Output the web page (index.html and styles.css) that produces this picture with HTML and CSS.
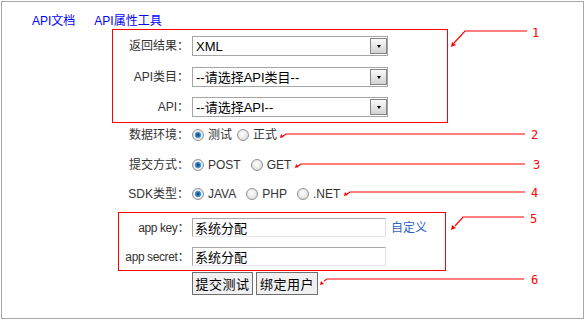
FILE: index.html
```html
<!DOCTYPE html>
<html lang="zh-CN">
<head>
<meta charset="utf-8">
<title>API测试工具</title>
<link rel="stylesheet" href="styles.css">
</head>
<body>
<div class="frame">
  <div class="nav"><a href="#">API文档</a><a href="#">API属性工具</a></div>
  <div class="form">
    <div class="group g-api">
      <div class="row sel-row"><span class="lbl">返回结果：</span><span class="sel"><select><option>XML</option></select></span></div>
      <div class="row sel-row"><span class="lbl">API类目：</span><span class="sel"><select><option>--请选择API类目--</option></select></span></div>
      <div class="row sel-row"><span class="lbl">API：</span><span class="sel"><select><option>--请选择API--</option></select></span></div>
    </div>
    <div class="row opt-row r-env"><span class="lbl">数据环境：</span>
      <label class="opt"><input type="radio" name="env" checked><span>测试</span></label>
      <label class="opt"><input type="radio" name="env"><span>正式</span></label>
    </div>
    <div class="row opt-row r-wide r-method"><span class="lbl">提交方式：</span>
      <label class="opt"><input type="radio" name="m" checked><span>POST</span></label>
      <label class="opt"><input type="radio" name="m"><span>GET</span></label>
    </div>
    <div class="row opt-row r-wide r-sdk"><span class="lbl">SDK类型：</span>
      <label class="opt"><input type="radio" name="sdk" checked><span>JAVA</span></label>
      <label class="opt"><input type="radio" name="sdk"><span>PHP</span></label>
      <label class="opt"><input type="radio" name="sdk"><span>.NET</span></label>
    </div>
    <div class="group g-key">
      <div class="row key-row"><span class="lbl">app key：</span><input class="txt" type="text" value="系统分配"><a class="custom" href="#">自定义</a></div>
      <div class="row key-row second"><span class="lbl">app secret：</span><input class="txt" type="text" value="系统分配"></div>
    </div>
    <div class="buttons">
      <button class="btn b1" type="button">提交测试</button><button class="btn b2" type="button">绑定用户</button>
    </div>
  </div>
</div>
<svg class="notes" width="585" height="320" viewBox="0 0 585 320" xmlns="http://www.w3.org/2000/svg">
  <g fill="none" stroke="#ff0000" stroke-width="1.2">
    <polyline points="527,31 465,31 454,43"/>
    <polyline points="525,134 286,134 283,136"/>
    <polyline points="525,164 301,164 298,166"/>
    <polyline points="525,192 350,192 347,194"/>
    <polyline points="524,217 463,217 455,226"/>
    <polyline points="524,279 327,279 324,281"/>
  </g>
  <g fill="#ff0000">
    <polygon points="451,47 452,42 456,45"/>
    <polygon points="280,138 281,134 284,137"/>
    <polygon points="295,168 296,164 299,167"/>
    <polygon points="344,196 345,192 348,195"/>
    <polygon points="451,230 452,225 456,228"/>
    <polygon points="320,285 321,281 324,284"/>
  </g>
  <g class="num" fill="#ff0000">
    <text x="532" y="37">1</text>
    <text x="531" y="139">2</text>
    <text x="533" y="169">3</text>
    <text x="531" y="197">4</text>
    <text x="530" y="223">5</text>
    <text x="531" y="284">6</text>
  </g>
</svg>
</body>
</html>
```
FILE: styles.css
```css
html, body {
  margin: 0;
  padding: 0;
  background: #ffffff;
}
body {
  position: relative;
  width: 585px;
  height: 320px;
  font-family: "Liberation Sans", "Noto Sans CJK SC", sans-serif;
  font-size: 12px;
  color: #333333;
}
.frame {
  box-sizing: border-box;
  margin: 1px 0 0 1px;
  width: 583px;
  height: 318px;
  border: 1px solid #a8a8a8;
}
.nav {
  display: flex;
  gap: 19px;
  height: 27px;
  padding: 12px 0 0 30px;
  box-sizing: border-box;
  line-height: 14px;
}
.nav a {
  color: #0000ff;
  text-decoration: none;
}
.form {
  padding: 0 0 0 110px;
}
.group {
  box-sizing: border-box;
  border: 1px solid #ff0000;
}
.g-api {
  width: 336px;
  padding: 6px 0 5px 0;
}
.row {
  display: flex;
  align-items: center;
}
.lbl {
  flex: none;
  width: 76px;
  margin-right: 3px;
  text-align: right;
  white-space: nowrap;
  line-height: 14px;
}
.sel-row {
  height: 20px;
}
.sel-row + .sel-row {
  margin-top: 11px;
}
.sel-row:last-child {
  margin-top: 10px;
}
.sel {
  position: relative;
  display: block;
  width: 196px;
  height: 20px;
}
.sel select {
  box-sizing: border-box;
  width: 100%;
  height: 100%;
  margin: 0;
  padding: 0 0 0 3px;
  border: 1px solid #a5a5a5;
  border-radius: 0;
  background: #ffffff;
  -webkit-appearance: none;
  appearance: none;
  font-family: "Liberation Sans", "Noto Sans CJK SC", sans-serif;
  font-size: 13px;
  color: #000000;
}
.sel::after {
  content: "";
  position: absolute;
  right: 1px;
  top: 2px;
  box-sizing: border-box;
  width: 17px;
  height: 16px;
  border: 1px solid #858585;
  background: linear-gradient(#fbfbfb, #d2d2d2);
  pointer-events: none;
}
.sel::before {
  content: "";
  position: absolute;
  z-index: 1;
  right: 7px;
  top: 9px;
  width: 0;
  height: 0;
  border-style: solid;
  border-width: 3px 2.5px 0 2.5px;
  border-color: #000000 transparent transparent transparent;
  pointer-events: none;
}
.opt-row {
  height: 22px;
  padding-left: 1px;
}
.r-env {
  margin-top: 1px;
}
.r-method {
  margin-top: 8px;
}
.r-sdk {
  margin-top: 7px;
}
.opt {
  display: flex;
  align-items: center;
  gap: 4px;
  line-height: 14px;
  color: #333333;
}
.opt + .opt {
  margin-left: 5px;
}
.r-wide .opt + .opt {
  margin-left: 10px;
}
.opt input {
  -webkit-appearance: none;
  appearance: none;
  box-sizing: border-box;
  width: 12px;
  height: 12px;
  margin: 0;
  border-radius: 50%;
  border: 1px solid #929292;
  background: radial-gradient(circle at 45% 40%, #ffffff 0, #ececec 45%, #cfcfcf 100%);
}
.opt input:checked {
  background: radial-gradient(circle at 50% 50%, #0d3a66 0, #1f6fb5 1.6px, #5ea3dd 3px, #eeeeee 3.6px, #d3d3d3 100%);
}
.g-key {
  width: 328px;
  margin: 7px 0 0 6px;
  padding: 5px 0 4px 0;
}
.g-key .lbl {
  width: 70px;
  letter-spacing: -0.4px;
}
.key-row {
  height: 19px;
}
.key-row.second {
  margin-top: 10px;
}
.txt {
  box-sizing: border-box;
  width: 194px;
  height: 19px;
  margin: 0;
  padding: 0 2px;
  border: 1px solid;
  border-color: #a9a9a9 #dfe1e6 #e3e5ea #a9a9a9;
  font-family: "Noto Sans CJK SC", sans-serif;
  font-size: 13px;
  color: #000000;
  background: #ffffff;
}
.custom {
  margin-left: 5px;
  color: #2f63c4;
  text-decoration: none;
  line-height: 14px;
}
.buttons {
  display: flex;
  gap: 3px;
  margin: 1px 0 0 80px;
}
.btn {
  box-sizing: border-box;
  height: 23px;
  margin: 0;
  padding: 0;
  border: 1px solid #6e6e6e;
  border-radius: 0;
  background: #f0f0f0;
  font-family: "Noto Sans CJK SC", sans-serif;
  font-size: 13px;
  color: #000000;
  letter-spacing: 0.5px;
}
.b1 {
  width: 61px;
}
.b2 {
  width: 62px;
}
.notes {
  position: absolute;
  top: 0;
  left: 0;
  pointer-events: none;
}
.num text {
  font-family: "DejaVu Sans Mono", monospace;
  font-size: 12px;
}
```
